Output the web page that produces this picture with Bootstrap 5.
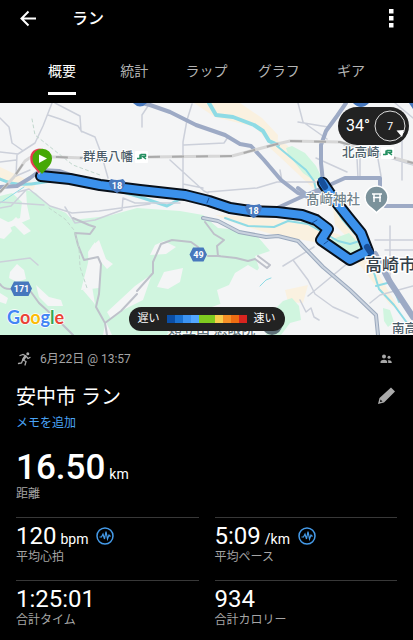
<!DOCTYPE html>
<html lang="ja" data-bs-theme="dark">
<head>
<meta charset="utf-8">
<meta name="viewport" content="width=device-width, initial-scale=1">
<title>ラン</title>
<link href="https://cdn.jsdelivr.net/npm/bootstrap@5.3.0/dist/css/bootstrap.min.css" rel="stylesheet">
<style>
body { background: #000; color: #fff; font-family: Roboto, "Noto Sans CJK JP", sans-serif; font-size: 14px; line-height: 20px; }
button, a { color: inherit; }
svg { display: block; }
.icon-btn { background: none; border: 0; padding: 0; }
.app-title { font-size: 16px; line-height: 20px; font-weight: 500; padding-left: 36px; }
.top-bar { padding: 9px 16px 0 20px; }
.tab-bar { padding: 30px 26px 8px; }
.tab-bar .nav-link { color: #b4b4b4; padding: 0 0 9px; line-height: 24px; border-bottom: 3px solid transparent; }
.tab-bar .nav-link.active { color: #fff; border-color: #fff; }
.map-canvas { width: 100%; height: auto; }
.map-canvas text { font-family: Roboto, "Noto Sans CJK JP", sans-serif; }
.map-canvas .logo-text { font-family: Lato, sans-serif; }
.weather-pill { background: #222; top: 4px; right: 4px; padding: 3px 3px 3px 8px; gap: 4px; font-size: 16px; }
.pace-pill { background: #222; left: 50%; bottom: 4px; transform: translateX(-50%); padding: 2px 9px; font-size: 11px; line-height: 20px; gap: 7px; white-space: nowrap; }
.swatches i { width: 8px; height: 8px; }
.muted { color: #a5a5a5; font-size: 12px; line-height: 16px; }
.activity-name { font-size: 20px; line-height: 28px; font-weight: 400; }
.memo-link { color: #4aa3f5; font-size: 12px; line-height: 16px; }
.distance { padding: 18px 0 15px; }
.big-value { font-size: 35px; line-height: 37px; font-weight: 500; }
.stat-value { font-size: 24px; line-height: 26px; }
.unit { font-size: 14px; line-height: 14px; font-weight: 400; }
.stats { column-gap: 16px; display: grid; grid-template-columns: 1fr 1fr; }
.stat { border-top: 1px solid #383838; min-height: 63px; padding-top: 5px; }
</style>
<script src="https://cdn.jsdelivr.net/npm/bootstrap@5.3.0/dist/js/bootstrap.bundle.min.js"></script>
</head>
<body>
<header>
  <div class="top-bar d-flex align-items-center">
    <button class="icon-btn" aria-label="戻る"><svg width="16" height="20" viewBox="0 0 16 20" fill="none" stroke="#fff" stroke-width="2"><path d="M16 9.500H2M8.500 2.500L1.500 9.500L8.500 16.500"/></svg></button>
    <h1 class="app-title m-0 flex-grow-1">ラン</h1>
    <button class="icon-btn" aria-label="メニュー"><svg width="12" height="20" viewBox="0 0 12 20" fill="#fff"><path d="M4 0h4.500v4.500H4zM4 7h4.500v4.500H4zM4 14h4.500v4.500H4z"/></svg></button>
  </div>
  <nav class="tab-bar d-flex" aria-label="表示">
    <div class="col d-flex justify-content-center"><a class="nav-link active" href="#" aria-current="page">概要</a></div>
    <div class="col d-flex justify-content-center"><a class="nav-link" href="#">統計</a></div>
    <div class="col d-flex justify-content-center"><a class="nav-link" href="#">ラップ</a></div>
    <div class="col d-flex justify-content-center"><a class="nav-link" href="#">グラフ</a></div>
    <div class="col d-flex justify-content-center"><a class="nav-link" href="#">ギア</a></div>
  </nav>
</header>
<main>
  <section class="position-relative overflow-hidden" aria-label="地図">
    <svg class="map-canvas" viewBox="0 103 413 232" fill="none" stroke-linejoin="round" stroke-linecap="round">
      <rect y="103" width="413" height="232" fill="#f4f5f6"/>
      <!-- sandy river banks -->
      <g fill="#faf1e0">
        <path d="M194 103H240L262 118L278 135L277 151L255 127L215 117Z"/>
        <path d="M273 138L287 145L318 180L315 190L280 157L270 148Z"/>
        <path d="M215 215L260 217L310 224L340 235L370 260L400 310L390 305L360 265L320 243L275 235L240 225Z"/>
        <path d="M333 207L350 222L363 245L350 240L335 225Z"/>
        <path d="M0 167L36 184L33 190L0 180Z"/>
        <path d="M285 290L308 285L303 303L288 302Z"/>
      </g>
      <!-- woodland -->
      <g fill="#d0f5df">
        <path d="M0 196L12 193L22 202L20 218L0 225Z"/>
        <path d="M26 190L36 193L48 205L66 213L72 220L108 216L137 208L180 211L203 215L218 228L240 230L258 237L270 251L255 256L259 268L250 281L232 285L223 303L209 308L199 335H112L106 322L96 310L92 286L83 290L85 276L90 268L96 256L95 242L88 252L89 270L82 289L94 303L105 324L103 335H0V232L30 219L27 205Z"/>
        <path d="M286 148L292 146L305 153L316 166L322 178L313 180L303 173L288 154Z"/>
        <path d="M330 240L349 233L362 247L358 253L347 256L335 248Z"/>
        <path d="M283 301L292 298L299 306L301 320L290 323L281 335H266L271 313Z"/>
        <path d="M383 308L390 310L394 322L388 327L384 321Z"/>
      </g>
      <g fill="#f4f5f6">
        <path d="M10 272L17 264L24 270L26 279L17 282L9 278Z"/>
        <path d="M36 285L49 297L61 300L63 306L48 306L39 297ZM0 293L8 298L6 304L0 302Z"/>
        <path d="M16 217L31 231L24 235L11 222Z"/>
        <path d="M0 218L8 222L12 231L4 239L0 238Z"/>
        <path d="M164 272L183 268L180 282L168 289L157 287ZM217 290L229 285L235 273L248 265L258 271L268 277L252 286L236 300L222 310Z"/>
        <path d="M92 246L99 240L106 259L113 264L107 269L101 262L99 288L81 290L87 267Z"/>
        <path d="M155 245L164 241L176 247L166 254L150 255Z"/>
        <path d="M107 312L135 286L152 274L143 300L125 309L111 319Z"/>
      </g>
      <!-- rivers -->
      <g stroke="#8edbe5" stroke-width="3">
        <path d="M0 179Q18 187 38 183T72 182T106 187L143 198L167 206L180 199"/>
        <path d="M209 103L216 115L233 117L254 125L263 131L269 141L278 145" stroke-width="4"/>
        <path d="M277 146L306 170L314 181L316 190" stroke-width="2"/>
        <path d="M225 218L248 226L274 227L288 221L308 224L338 241L350 244L363 240" stroke-width="2"/>
        <path d="M333 205L342 219L356 235L363 247M372 266L379 289L394 305L410 327M376 286L391 282L399 302" stroke-width="2"/>
        <path d="M0 203L24 187M260 286L266 280L271 278" stroke-width="1"/>
      </g>
      <!-- minor roads -->
      <g stroke="#ccd0da" stroke-width="1.500">
        <path d="M0 118L9 127L12 143L22 150M52 103L43 126L35 143L18 154L0 152M48 115L60 119L78 126L82 132M55 103L80 116L81 131L95 137L101 153L108 178M17 155L16 176L30 170M0 162L16 160"/>
        <path d="M142 127V115L150 103M192 104L187 120L183 142V190M184 145L224 143L228 137M170 160L204 191L208 193M208 192L257 188L277 182L320 182M183 184L203 188"/>
        <path d="M298 103L303 122L327 139M298 122L328 127M344 145L365 147L380 155L413 165M375 142L381 176M357 158L358 178M395 103L413 118M402 140V180M360 150V178M316 158L347 172"/>
        <path d="M18 192L29 189L50 206L72 213L99 211L150 204M65 207L75 223L95 220L122 210L123 198L135 203H180M0 208L11 206L26 190M0 202L44 205"/>
        <path d="M293 260L308 280L315 294L333 307L358 318M308 296L360 253M370 303L380 295L413 286M0 262L30 258L38 265M283 266L314 247M390 226V286M375 240H413M385 250H413"/>
        <path d="M300 300L306 312L311 308L314 317L319 320M280 170L282 181"/>
      </g>
      <g stroke="#bec1ca" stroke-width="2">
        <path d="M0 284Q3 289 10 289L31 292L39 303L50 313L63 325L73 335M73 218L89 225L95 227L90 234L75 233L78 245L84 260L98 257L101 264L99 294L96 307L105 323L107 335M105 323L121 311L137 294"/>
        <path d="M137 291L145 282L153 273L153 262L161 244L172 240L191 242L198 247L202 254M205 222L214 234L224 240L217 246L218 256L236 258L248 261L255 259L267 268L270 265L258 256M208 256H220"/>
      </g>
      <path d="M49 208L65 219L74 230L79 248L80 267L87 288M32 119L35 135L73 165L100 175" stroke="#c2d8ce" stroke-dasharray="3 3"/>
      <!-- arterial roads -->
      <g stroke="#9daac5" stroke-width="4">
        <path d="M0 187L17 186L30 178L41 170L59 171L79 178"/>
        <path d="M137 102L150 105L170 112L196 125L225 135L240 144L251 146L264 160L281 180L298 193L315 200"/>
        <path d="M346 103L337 116L326 131L321 145L321 163L323 182"/>
        <path d="M273 210L299 198L325 187L345 178H380V190L385 206H413M298 188L307 195L325 190"/>
        <path d="M375 254L390 282L413 317" stroke-width="6"/>
      </g>
      <path d="M203 218L218 221L239 232L266 237L278 236L298 241L323 267L350 290L376 315L378 335" stroke="#9ba9bd" stroke-width="4"/>
      <path d="M203 218L218 221L239 232L266 237L278 236L298 241L323 267L350 290L376 315L378 335" stroke="#cad3df" stroke-width="2"/>
      <path d="M0 192L14 177L25 161L31 157H58L83 158M148 157L232 156L277 144L290 141L340 142L380 154L413 163" stroke="#d7d7d7" stroke-width="3"/>
      <path d="M0 192L14 177L25 161L31 157H58L83 158M148 157L232 156L277 144L290 141L340 142L380 154L413 163" stroke="#aaa" stroke-width="2" stroke-linecap="butt" stroke-dasharray="12 12"/>
      <!-- running track -->
      <path d="M41 176L70 179L100 185L140 190L185 195L209 201L230 208L250 211L277 212L302 215L316 220L328 229L321 240L350 260L368 251L361 233L348 217L333 198L323 183" stroke="#08101a" stroke-width="12"/>
      <path d="M41 176L70 179L100 185L140 190L185 195L209 201L230 208L250 211L277 212L302 215L316 220L328 229L321 240L350 260L368 251L361 233L348 217L333 198L323 183" stroke="#3b91ec" stroke-width="8"/>
      <path d="M321 180L325 187M367 247L371 253" stroke="#174f99" stroke-width="6"/>
      <path d="M207 203L209 198M312 223L317 220M324 244L328 241" stroke="#174f99"/>
      <!-- place labels -->
      <g fill="#4b5d69" stroke="#fff" stroke-width="2" paint-order="stroke" font-weight="500">
        <text x="83" y="161" font-size="12.500">群馬八幡</text>
        <text x="342" y="157" font-size="12.500">北高崎</text>
        <text x="306" y="204" font-size="13.500" fill="#74858c">髙﨑神社</text>
        <text x="392" y="333" font-size="12.500">南高</text>
        <text x="168" y="334" font-size="14" fill="#66777c">類立山 慈眼院</text>
      </g>
      <g>
        <rect x="135" y="151" width="13" height="12" rx="1" fill="#fff"/><path d="M137 158.500H140V154.500M141 159V154.500H145.500V156.500H142.500L146 159" stroke="#249061" stroke-width="1.500" stroke-linecap="butt"/>
        <rect x="381" y="147" width="13" height="12" rx="1" fill="#fff"/><path d="M383 154.500H386V150.500M387 155V150.500H391.500V152.500H388.500L392 155" stroke="#249061" stroke-width="1.500" stroke-linecap="butt"/>
      </g>
      <circle cx="272" cy="325" r="10" fill="#5e7079"/>
      <path d="M376.500 213C373 208 365 206 365 197.500A11.500 11.500 0 0 1 388 197.500C388 206 380 208 376.500 213Z" fill="#7b929b" stroke="#fff" stroke-width="1.500"/>
      <path d="M372 194H382M373 197.500H381M374 194V202M380 194V202" stroke="#fff" stroke-width="1.500" stroke-linecap="butt"/>
      <text x="365" y="271" font-size="17" font-weight="500" fill="#344049" stroke="#fff" stroke-width="3" paint-order="stroke">高崎市</text>
      <!-- route shields -->
      <g fill="#4778bd">
        <path d="M111 179Q117 181 123 179L125.500 182Q124 190 117 193Q110 190 108.500 182Z"/>
        <path d="M247.500 204Q253.500 206 259.500 204L262 207Q260.500 215 253.500 218Q246.500 215 245 207Z"/>
        <path d="M133 103H147Q140 110 133 103ZM353 103H369Q361 111 353 103ZM409 103H413V109Z"/>
        <path d="M14 281.500H28.500L32 288.500L28.500 296H14L10.500 288.500ZM193 247.500H203.500L207 254.500L203.500 261.500H193L189.500 254.500Z"/>
      </g>
      <g fill="#fff" text-anchor="middle" font-size="9" font-weight="700">
        <text x="117" y="189">18</text><text x="253.500" y="214">18</text><text x="21.500" y="292">171</text><text x="198.500" y="258">49</text>
      </g>
      <path d="M39 174C34 167 30 165 30 159A9.500 9.500 0 0 1 43 149L46 158Z" fill="#e53950" stroke="#fff" stroke-width=".5"/>
      <path d="M42 174C38 169 32.500 165 32.500 158.500A9.700 9.700 0 0 1 52 158.500C52 165 46 169 42 174Z" fill="#46a806"/>
      <path d="M39 154.500L47 158.500L39 163Z" fill="#fff"/>
      <text class="logo-text" x="7" y="324" font-size="18" stroke="#fff" stroke-width="1.500" paint-order="stroke" font-weight="700"><tspan fill="#4285f4">G</tspan><tspan fill="#e94335">o</tspan><tspan fill="#fbbc05">o</tspan><tspan fill="#4285f4">g</tspan><tspan fill="#34a853">l</tspan><tspan fill="#e94335">e</tspan></text>
    </svg>
    <div class="weather-pill position-absolute rounded-pill d-flex align-items-center"><span>34°</span>
      <svg width="32" height="32" viewBox="0 0 32 32"><circle cx="16" cy="16" r="15" fill="none" stroke="#ddd"/><path d="M22.500 20.500L30 20L28 27Z" fill="#fff"/><text x="16" y="20" font-size="11" text-anchor="middle" fill="#fff">7</text></svg>
    </div>
    <div class="pace-pill position-absolute rounded-pill d-flex align-items-center"><span>遅い</span>
      <span class="swatches d-flex" aria-hidden="true"><i style="background:#0b4ea5"></i><i style="background:#1b72d2"></i><i style="background:#3c93f2"></i><i style="background:#53a7ff"></i><i style="background:#7fcb20"></i><i style="background:#7fcb20"></i><i style="background:#f8cd4c"></i><i style="background:#f69027"></i><i style="background:#ee6c12"></i><i style="background:#d8241f"></i></span>
      <span>速い</span>
    </div>
  </section>
  <section class="px-3 pt-3">
    <div class="muted d-flex align-items-center">
      <svg width="16" height="16" viewBox="0 0 16 16" fill="none" stroke="#aaa" stroke-width="1.500" stroke-linecap="round"><circle cx="11.800" cy="2.800" r="1.500" fill="#aaa" stroke="none"/><path d="M4 4.500L7 3.500L10 5L12 7.500L14 6.500M9 5.500L7 8.500" stroke-width="1.300"/><path d="M9.300 5.500L7.300 8.500" stroke-width="2.500"/><path d="M7 9L10 10.500L9 14M6.500 9.500L5.500 12L2.500 12.500" stroke-width="1.300"/></svg>
      <span class="ms-2 flex-grow-1">6月22日 @ 13:57</span>
      <svg width="14" height="10" viewBox="0 0 12 10" fill="#a8a8a8" class="me-1"><circle cx="4" cy="2.500" r="2"/><circle cx="9" cy="3.300" r="1.500"/><path d="M.5 9V7.500Q1 5.700 4 5.700T7.200 7.500V9ZM8.200 9V7.500L7.800 6.300Q11.500 5.700 11.700 8V9Z"/></svg>
    </div>
    <div class="d-flex align-items-center pt-3">
      <h2 class="activity-name m-0 flex-grow-1">安中市 ラン</h2>
      <button class="icon-btn" aria-label="編集"><svg width="20" height="20" viewBox="0 0 20 20" fill="#aaa"><path d="M14 .5L18 4.500L7 15.500L1 17L2.500 11ZM3.500 12.500L3 15L5.500 14.500Z" fill-rule="evenodd"/></svg></button>
    </div>
    <div class="d-flex pt-1"><a class="memo-link text-decoration-none" href="#">メモを追加</a></div>
    <div class="distance">
      <div class="big-value d-flex align-items-baseline gap-1">16.50 <span class="unit">km</span></div>
      <div class="muted">距離</div>
    </div>
    <div class="stats">
      <div class="stat"><div class="stat-value d-flex align-items-baseline gap-1">120 <span class="unit">bpm</span><svg class="align-self-center ms-1" width="18" height="18" viewBox="0 0 18 18" fill="none" stroke="#459be9"><circle cx="9" cy="9" r="8" stroke-width="1.500"/><path d="M3.500 10H5.500L7 7L8.500 12L10 4.500L11.500 12L13 8L14.500 9.500" stroke-width="1.200"/></svg></div><div class="muted">平均心拍</div></div>
      <div class="stat"><div class="stat-value d-flex align-items-baseline gap-1">5:09 <span class="unit">/km</span><svg class="align-self-center ms-1" width="18" height="18" viewBox="0 0 18 18" fill="none" stroke="#459be9"><circle cx="9" cy="9" r="8" stroke-width="1.500"/><path d="M3.500 10H5.500L7 7L8.500 12L10 4.500L11.500 12L13 8L14.500 9.500" stroke-width="1.200"/></svg></div><div class="muted">平均ペース</div></div>
      <div class="stat"><div class="stat-value">1:25:01</div><div class="muted">合計タイム</div></div>
      <div class="stat"><div class="stat-value">934</div><div class="muted">合計カロリー</div></div>
    </div>
  </section>
</main>
</body>
</html>
